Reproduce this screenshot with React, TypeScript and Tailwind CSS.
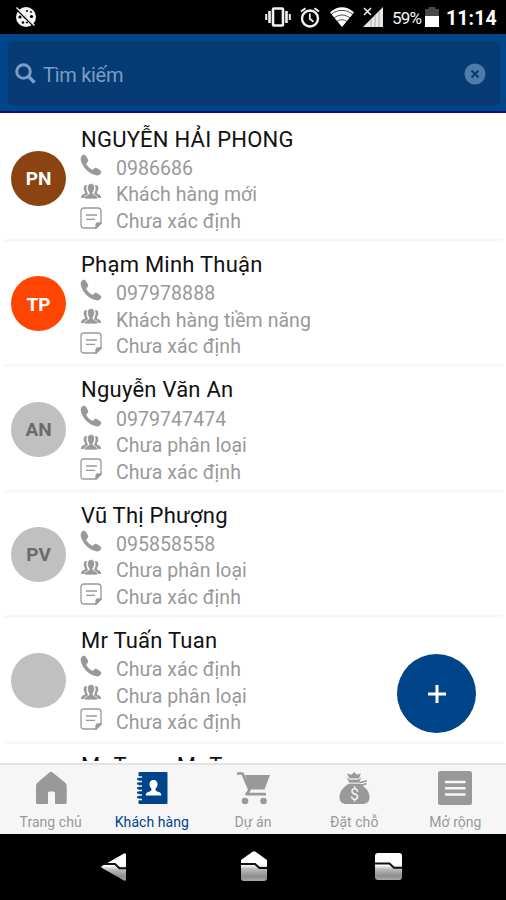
import React, { ReactNode } from 'react';
import clsx from 'clsx';

interface Customer {
	name: string;
	initials: string;
	phone: string;
	group: string;
	note: string;
	avatar: string;
}

const customers: Customer[] = [
	{ name: 'NGUYỄN HẢI PHONG', initials: 'PN', phone: '0986686', group: 'Khách hàng mới', note: 'Chưa xác định', avatar: 'bg-[#8b4311] text-white' },
	{ name: 'Phạm Minh Thuận', initials: 'TP', phone: '097978888', group: 'Khách hàng tiềm năng', note: 'Chưa xác định', avatar: 'bg-[#ff4500] text-white' },
	{ name: 'Nguyễn Văn An', initials: 'AN', phone: '0979747474', group: 'Chưa phân loại', note: 'Chưa xác định', avatar: 'bg-[#c0c0c0] text-[#6b6b6b]' },
	{ name: 'Vũ Thị Phượng', initials: 'PV', phone: '095858558', group: 'Chưa phân loại', note: 'Chưa xác định', avatar: 'bg-[#c0c0c0] text-[#6b6b6b]' },
	{ name: 'Mr Tuấn Tuan', initials: '', phone: 'Chưa xác định', group: 'Chưa phân loại', note: 'Chưa xác định', avatar: 'bg-[#c0c0c0]' },
];

// only the top edge of this row shows above the tab bar
const nextCustomerName = 'Mr Trang Mr Trang';

const tabs = [
	{ label: 'Trang chủ', icon: HomeIcon },
	{ label: 'Khách hàng', icon: ContactsIcon, active: true },
	{ label: 'Dự án', icon: CartIcon },
	{ label: 'Đặt chỗ', icon: MoneyBagIcon },
	{ label: 'Mở rộng', icon: MoreIcon },
];

export default function App() {
	return (
		<div className="flex h-[900px] w-[506px] flex-col overflow-hidden bg-white font-['Roboto',sans-serif]">
			<StatusBar />
			<SearchHeader />
			<main className="relative min-h-0 flex-1">
				<div className="h-[648px] overflow-hidden pt-[2px]">
					{customers.map((customer) => (
						<CustomerRow key={customer.name} customer={customer} />
					))}
					<h2 className="pt-[9.5px] pl-[81px] text-[22px] leading-[30px] tracking-[0.3px] text-[#111]">{nextCustomerName}</h2>
				</div>
				<button aria-label="Thêm" className="absolute right-[30px] bottom-[30px] flex size-[79px] items-center justify-center rounded-full bg-[#00448a]">
					<svg viewBox="0 0 18 18" className="size-[18px]" stroke="white" strokeWidth="3">
						<path d="M9 0v18M0 9h18" />
					</svg>
				</button>
			</main>
			<TabBar />
			<NavigationBar />
		</div>
	);
}

function StatusBar() {
	return (
		<div className="flex h-[34px] shrink-0 items-center bg-black pr-[10px] pl-[15px] text-white">
			<svg viewBox="0 0 22 22" className="size-[22px]">
				<circle cx="11" cy="11" r="10" fill="#f4f4f4" />
				<g fill="#000">
					<circle cx="5" cy="11" r="1.6" />
					<circle cx="10" cy="11" r="1.4" />
					<circle cx="16.500" cy="10.500" r="1.6" />
					<circle cx="8" cy="16.500" r="1.3" />
					<circle cx="12" cy="16.500" r="1" />
					<circle cx="12" cy="5" r="1" />
					<circle cx="16" cy="6" r=".9" />
				</g>
				<path d="M1.500 3.500l17 16.500" stroke="#000" strokeWidth="1.600" />
				<path d="M1.500 1.500l18 18" stroke="#f4f4f4" strokeWidth="1.400" />
			</svg>
			<div className="ml-auto flex items-center">
				<svg viewBox="0 0 26 20" className="h-5 w-[26px]" fill="none" stroke="#f2f2f2">
					<rect x="8" y="1.500" width="10" height="17" rx="1" strokeWidth="2.600" />
					<path d="M4.500 4v12M21.500 4v12" strokeWidth="2.600" />
					<path d="M1.200 7v6M24.800 7v6" strokeWidth="2" />
				</svg>
				<svg viewBox="0 0 20 21" className="ml-[9px] h-[21px] w-5" fill="none" stroke="#f2f2f2">
					<circle cx="10" cy="11.500" r="8" strokeWidth="2.400" />
					<path d="M9.800 6.500v5.300l3.700 3" strokeWidth="1.800" />
					<path d="M1 4.500l4.500-3.300M19 4.500l-4.500-3.300" strokeWidth="2" />
				</svg>
				<svg viewBox="0 0 24 20" className="ml-[10px] h-5 w-6">
					<path d="M0 5.500C7-1.500 17-1.500 24 5.500L12 20z" fill="#fff" />
					<path d="M1 7.500c6.500-5.500 15.500-5.500 22 0M4 11c5-4 11-4 16 0M7 14.500c3-2.300 7-2.300 10 0" fill="none" stroke="#222" strokeWidth=".8" />
				</svg>
				<svg viewBox="0 0 21 20" className="ml-[9px] h-5 w-[21px]">
					<path d="M20 0v20H0z" fill="#e8e8e8" />
					<path d="M8 12v8M12 8v12M16 4v16" stroke="#aaa" strokeWidth="1" />
					<path d="M1 1l7 7M8 1L1 8" stroke="#eee" strokeWidth="1.600" />
				</svg>
				<span className="mt-[2px] ml-[8px] w-[31px] text-[17px] leading-none tracking-[-0.8px] whitespace-nowrap text-[#f4f4f4]">59%</span>
				<svg viewBox="0 0 14 20" className="ml-[2px] h-5 w-[14px]">
					<path d="M0 2h3.500V0h7v2H14v18H0z" fill="#494949" />
					<path d="M0 9h14v11H0z" fill="#fff" />
				</svg>
				<span className="mt-[3px] ml-[7px] w-[50px] text-[19.5px] leading-none font-bold tracking-[0.1px]">11:14</span>
			</div>
		</div>
	);
}

function SearchHeader() {
	return (
		<header className="flex h-[79px] shrink-0 items-center border-b-2 border-[#10107a] bg-[#00468b] pr-[6px] pl-2">
			<div className="mt-[2px] flex h-[65px] w-full items-center rounded-[5px] bg-[#063c73] pr-[14px] pl-[7px] text-[#7c9cc4]">
				<svg viewBox="0 0 21 21" className="size-[21px]" fill="none" stroke="currentColor">
					<circle cx="8.500" cy="8.500" r="6.800" strokeWidth="3" />
					<path d="M13.500 13.500l6 6" strokeWidth="3.400" />
				</svg>
				<span className="mt-[2px] ml-[7px] text-[20px] tracking-[-0.3px]">Tìm kiếm</span>
				<svg viewBox="0 0 22 22" className="ml-auto size-[22px]">
					<circle cx="11" cy="11" r="10.500" fill="#4f7ba8" />
					<path d="M7.500 7.500l7 7M14.500 7.500l-7 7" stroke="#063c73" strokeWidth="2" />
				</svg>
			</div>
		</header>
	);
}

function CustomerRow({ customer }: { customer: Customer }) {
	return (
		<div className="mr-[3px] ml-1 h-[125.4px]">
			<div className="flex h-[127px] border-b-[3px] border-[#f8f8f8] pl-[7px]">
				<div className={clsx('mt-[36px] flex size-[55px] shrink-0 items-center justify-center rounded-full pt-[2px] text-[19px] font-bold', customer.avatar)}>
					{customer.initials}
				</div>
				<div className="ml-[14px] pt-[9.5px] whitespace-nowrap">
					<h2 className="h-[30px] pl-px text-[22px] leading-[30px] tracking-[0.24px] text-[#111]">{customer.name}</h2>
					<DetailLine icon={<PhoneIcon />}>{customer.phone}</DetailLine>
					<DetailLine icon={<GroupIcon />}>{customer.group}</DetailLine>
					<DetailLine icon={<NoteIcon />}>{customer.note}</DetailLine>
				</div>
			</div>
		</div>
	);
}

function DetailLine({ icon, children }: { icon: ReactNode; children: ReactNode }) {
	return (
		<div className="flex h-[26.5px] items-center text-[#999]">
			<span className="mb-[6px] w-[22px]">{icon}</span>
			<span className="mt-[2px] ml-[14px] text-[19.5px] leading-[26px] tracking-[0.06px]">{children}</span>
		</div>
	);
}

function TabBar() {
	return (
		<nav className="flex h-[71px] shrink-0 border-t-2 border-[#e2e2e2] bg-[#f6f6f6]">
			{tabs.map(({ label, icon: Icon, active }) => (
				<div key={label} className={clsx('flex flex-1 flex-col items-center pt-[6px]', active ? 'text-[#00448a]' : 'text-[#999]')}>
					<Icon />
					<span className="mt-[7px] text-[14px] leading-[20px] tracking-[0.05px] whitespace-nowrap">{label}</span>
				</div>
			))}
		</nav>
	);
}

function NavigationBar() {
	return (
		<div className="flex h-[66px] shrink-0 items-center bg-black pl-[101px]">
			<svg viewBox="0 0 25 28" className="h-7 w-[25px]">
				<NavGradient id="nav-back" />
				<path d="M23 .5Q25-.5 25 2v24q0 2.500-2 1.500L1 15q-1.500-1 0-2z" fill="url(#nav-back)" />
				<path d="M3 11h11l4.500 4.200H25" fill="none" stroke="#111" strokeWidth="2" />
			</svg>
			<svg viewBox="0 0 26 30" className="mb-[2px] ml-[115px] h-[30px] w-[26px]">
				<NavGradient id="nav-home" />
				<path d="M11.500.8q1.500-1.300 3 0L26 9v18q0 3-3 3H3q-3 0-3-3V9z" fill="url(#nav-home)" />
				<path d="M0 13h14l4.500 4H26" fill="none" stroke="#111" strokeWidth="2" />
			</svg>
			<svg viewBox="0 0 27 27" className="mb-[1px] ml-[108px] size-[27px]">
				<NavGradient id="nav-recent" />
				<rect width="27" height="27" rx="3" fill="url(#nav-recent)" />
				<path d="M0 10.500h14.500l4.500 4.200h8" fill="none" stroke="#111" strokeWidth="2" />
			</svg>
		</div>
	);
}

function NavGradient({ id }: { id: string }) {
	return (
		<linearGradient id={id} x1="0" y1="0" x2="0" y2="1">
			<stop offset="0.45" stopColor="#fff" />
			<stop offset="0.6" stopColor="#bbb" />
			<stop offset="0.85" stopColor="#8f8d8b" />
			<stop offset="1" stopColor="#aaa" />
		</linearGradient>
	);
}

function PhoneIcon() {
	return (
		<svg viewBox="0 0 22 22" className="size-[22px]" fill="#999">
			<path d="M1.500 2.200C2.800.6 4.800.3 5.700 1.500L8 5.500c.6 1.200.2 2.200-1.200 3.200-.6.500-.6 1-.2 1.700 1.300 2.200 3 3.900 5.200 5.100.8.400 1.200.300 1.700-.3 1-1.300 2-1.700 3.200-1.100l3.900 2.400c1.200.8.800 2.700-.8 4-1.600 1.200-3.700 1.100-6.100.1C8 18.200 3.600 13.800 1.400 8.200.5 5.700.4 3.600 1.500 2.200z" />
		</svg>
	);
}

function GroupIcon() {
	return (
		<svg viewBox="0 0 22 17" className="h-[17px] w-[22px]" fill="#999">
			<path d="M7 2C4.500 1.500 3.300 3.300 3.700 6c.2 1.500.8 2.400 1.300 3 .3 1.300-.3 1.800-1.500 2.300C1.800 12 1 12.800 1 15h4c.3-1.300 1.300-2 3.700-3C6.500 9 5.700 5 7 2zM15 2c2.500-.5 3.700 1.300 3.300 4-.2 1.500-.8 2.400-1.300 3-.3 1.300.3 1.800 1.500 2.300 1.700.7 2.500 1.500 2.500 3.700h-4c-.3-1.300-1.300-2-3.700-3C15.500 9 16.300 5 15 2z" />
			<path d="M11 .5c2.500 0 3.700 1.700 3.500 4.500-.1 2-.7 3.300-1.600 4.300-.3 1.500.2 2 1.700 2.600 2 .8 3 1.500 3 4.100H4.400c0-2.600 1-3.300 3-4.100 1.500-.6 2-1.100 1.700-2.600C8.200 8.300 7.600 7 7.500 5 7.300 2.200 8.500.5 11 .5z" stroke="white" strokeWidth=".7" />
		</svg>
	);
}

function NoteIcon() {
	return (
		<svg viewBox="0 0 22 22" className="size-[22px]" fill="none" stroke="#999" strokeWidth="1.300">
			<path d="M4 1h14q3 0 3 3v12l-5 5H4q-3 0-3-3V4q0-3 3-3z" />
			<path d="M16 21v-2.500q0-2.500 2.500-2.500H21z" fill="#999" />
			<path d="M6 8h11M6 12.300h9" />
		</svg>
	);
}

function HomeIcon() {
	return (
		<svg viewBox="0 0 34 34" className="size-[34px]" fill="currentColor">
			<path d="M15.700 1.200q1.300-1 2.600 0L31 11.500q1.700 1.400 1.700 3.500v16.500q0 1.500-1.500 1.500H22q-1 0-1-1V22q0-1.500-1.500-1.500h-4Q14 20.500 14 22v10q0 1-1 1H3.500Q2 33 2 31.500V15q0-2.100 1.700-3.500z" />
		</svg>
	);
}

function ContactsIcon() {
	return (
		<svg viewBox="0 0 34 34" className="size-[34px]">
			<rect x="3.500" y="1" width="29" height="32" rx="1" fill="currentColor" />
			<g stroke="#f6f6f6" strokeWidth="1.700">
				<path d="M2 6h5M2 10.500h5M2 15h5M2 19.500h5M2 24h5M2 28.500h5" />
			</g>
			<path d="M2 8.200h3M2 12.700h3M2 17.200h3M2 21.700h3M2 26.200h3" stroke="currentColor" strokeWidth="1.800" />
			<path d="M18.500 9c2.700 0 4.200 1.800 4 4.500-.1 2-1 3.200-1.900 4-.2 2 .3 2.600 2.400 3.300 2.200.7 3.300 1.300 3.300 3.700H10.700c0-2.400 1.100-3 3.300-3.700 2.100-.7 2.600-1.300 2.400-3.300-.9-.8-1.800-2-1.900-4-.2-2.700 1.300-4.500 4-4.500z" fill="#fff" />
		</svg>
	);
}

function CartIcon() {
	return (
		<svg viewBox="0 0 34 34" className="size-[34px]" fill="currentColor">
			<path d="M9 4h25l-5.500 14.500H13z" />
			<path d="M1 2.500h5.500l7 16.500-3 4.200h19.500" fill="none" stroke="currentColor" strokeWidth="2.700" strokeLinejoin="round" />
			<circle cx="9" cy="30" r="3.300" />
			<circle cx="27.500" cy="30" r="3.300" />
		</svg>
	);
}

function MoneyBagIcon() {
	return (
		<svg viewBox="0 0 34 34" className="size-[34px]" fill="currentColor">
			<path d="M12.500 12.500h9.500c6 3 10.500 8 10.500 13.500 0 5-3 7-7 7h-16c-4 0-7-2-7-7 0-5.500 4-10.500 10-13.500z" />
			<path d="M10 2.500l4.500 1.200L17.200 1l2.700 2.700 4-1.200-2 5h-9.600z" />
			<path d="M9 5.500l3.500 2.700h9l3.300-2.700-2.200 6.500H12z" stroke="#f6f6f6" strokeWidth=".7" />
			<path d="M22.500 11.500c3 .3 4-1.500 7.500-1.500M23.500 13.500c2.500 1 4 0 6-1" fill="none" stroke="currentColor" strokeWidth="1.600" />
			<text x="17.500" y="28.500" textAnchor="middle" fontSize="16" fill="#f6f6f6">$</text>
		</svg>
	);
}

function MoreIcon() {
	return (
		<svg viewBox="0 0 34 34" className="size-[34px]">
			<rect y="0" width="34" height="34" rx="2.500" fill="currentColor" />
			<path d="M8 11h18.500M8 17.300h18.500M8 23.500h18.500" stroke="#f6f6f6" strokeWidth="2.500" strokeLinecap="round" />
		</svg>
	);
}
